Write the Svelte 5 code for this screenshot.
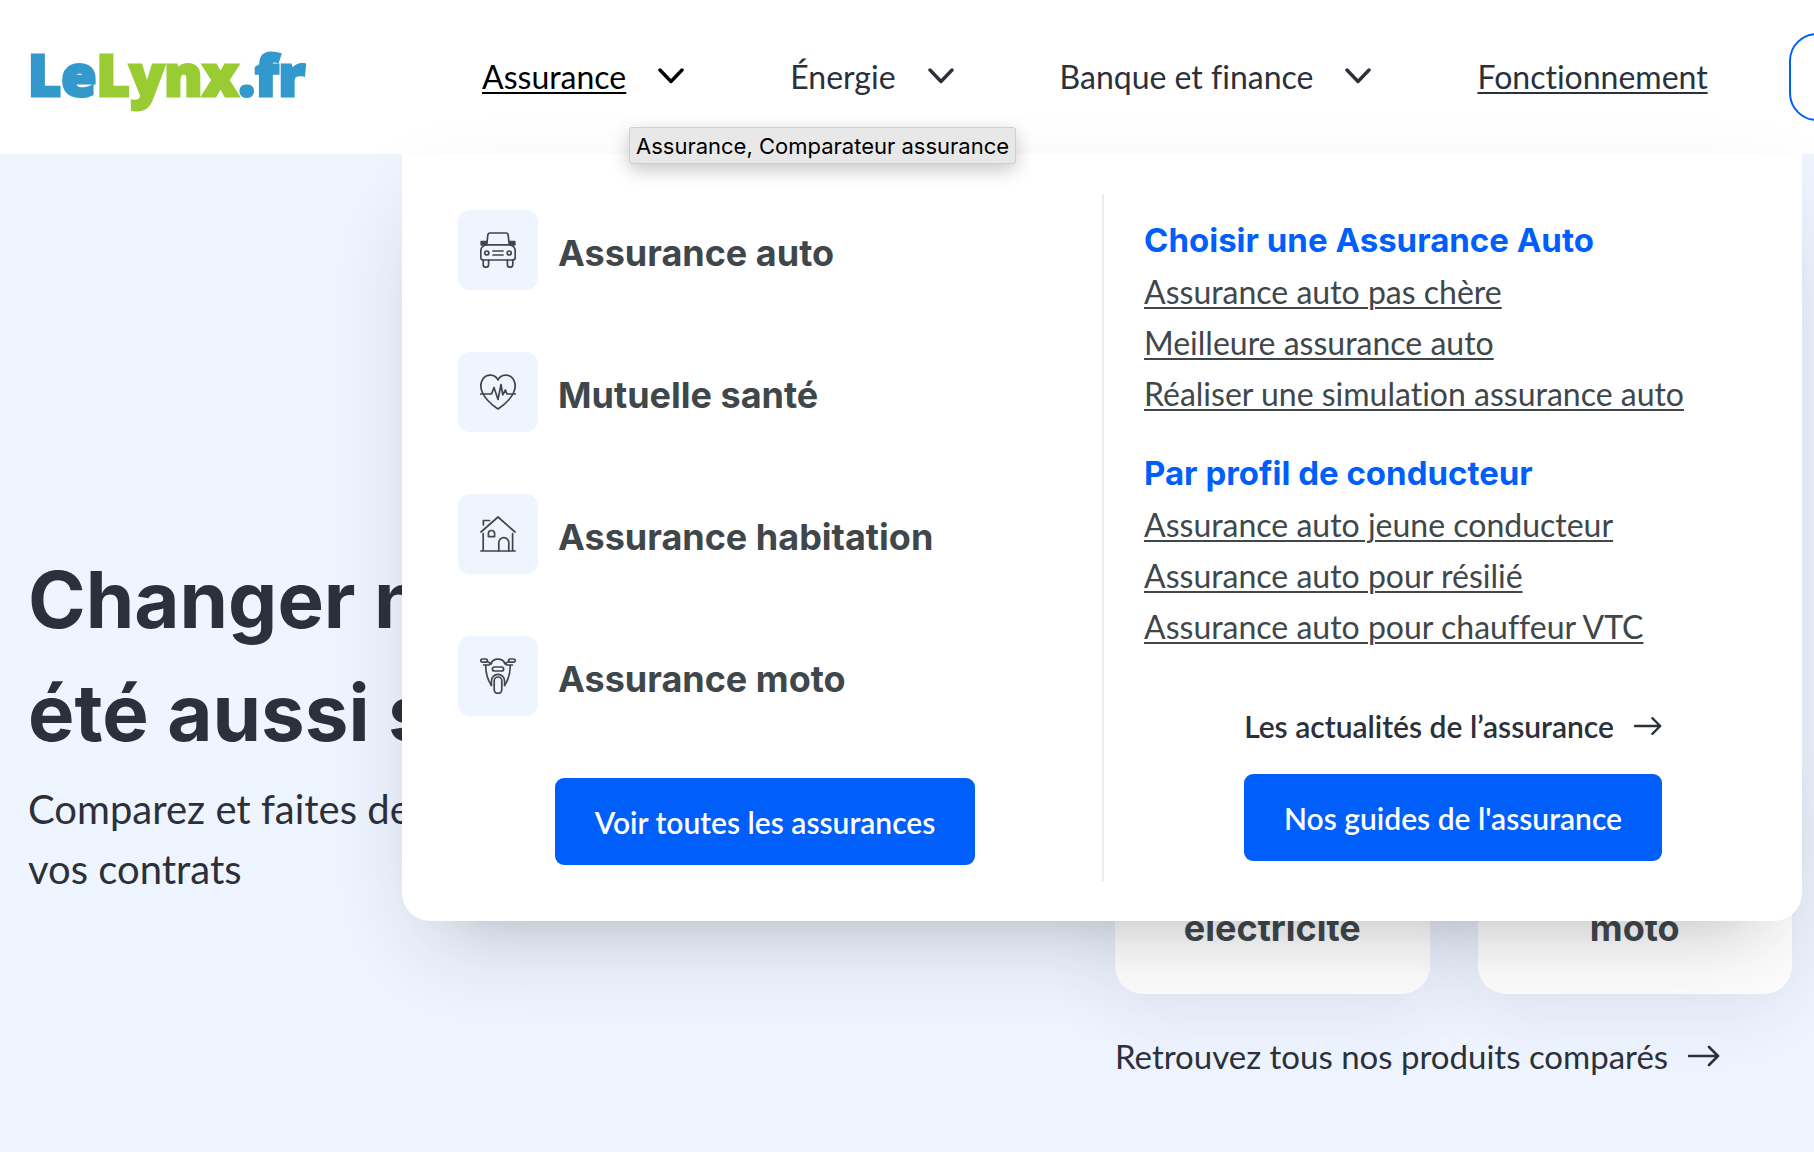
<script>
  const nav = [
    { label: 'Assurance', menu: true, active: true },
    { label: 'Énergie', menu: true },
    { label: 'Banque et finance', menu: true },
    { label: 'Fonctionnement', menu: false }
  ];

  const products = [
    { label: 'Assurance auto', icon: 'car' },
    { label: 'Mutuelle santé', icon: 'heart' },
    { label: 'Assurance habitation', icon: 'house' },
    { label: 'Assurance moto', icon: 'moto' }
  ];

  const groups = [
    {
      title: 'Choisir une Assurance Auto',
      links: ['Assurance auto pas chère', 'Meilleure assurance auto', 'Réaliser une simulation assurance auto']
    },
    {
      title: 'Par profil de conducteur',
      links: ['Assurance auto jeune conducteur', 'Assurance auto pour résilié', 'Assurance auto pour chauffeur VTC']
    }
  ];
</script>

{#snippet icon(name)}
  <svg class="icon" viewBox="0 0 36 36" aria-hidden="true">
    {#if name === 'car'}
      <path d="M6.8 12.5 L7.8 3.2 Q8 1 10 1 H26 Q28 1 28.2 3.2 L29.2 12.5" />
      <path class="solid" d="M1.2 9.5 H6.4 L6 12.8 H1.2 Z M34.8 9.5 H29.6 L30 12.8 H34.8 Z" />
      <path d="M6 12.8 H30 Q35.2 14.5 35.2 19 V25.5 Q35.2 28 32.5 28 H3.5 Q0.8 28 0.8 25.5 V19 Q0.8 14.5 6 12.8 Z" />
      <circle cx="6.8" cy="21" r="2" />
      <circle cx="29.2" cy="21" r="2" />
      <path d="M13 19 H23 M13 23 H23" />
      <path d="M3.2 28 V32.5 A2.7 2.7 0 0 0 8.6 32.5 V28 M27.4 28 V32.5 A2.7 2.7 0 0 0 32.8 32.5 V28" />
    {:else if name === 'heart'}
      <path d="M18 6 C15 -0.5 6.5 -0.2 3 4.8 C0.6 8.3 0.4 14 2.4 18.5 C5.2 25 12 31 18 35 C24 31 30.8 25 33.6 18.5 C35.6 14 35.4 8.3 33 4.8 C29.5 -0.2 21 -0.5 18 6 Z" />
      <path d="M0.2 20 H11.5 L14 13.5 L18 25.5 L21 10.5 L22.8 20.8 L25.4 16 L27 20 H35.8" />
    {:else if name === 'house'}
      <path d="M1 16 L18 1 L35 16 M3.4 9 V4.5 H9.5 M3.2 17.5 V35 M32.6 17.5 V35 M0.8 35 H35.2" />
      <path d="M8.4 20.6 V17.6 A3.1 3.1 0 0 1 14.6 17.6 V20.6 Z" />
      <path d="M18.8 35 V26.6 A5 5 0 0 1 28.8 26.6 V35" />
    {:else}
      <rect x="0.8" y="1" width="6.6" height="3.2" rx="1.6" />
      <rect x="28.6" y="1" width="6.6" height="3.2" rx="1.6" />
      <path d="M7 3.4 L11 5.6 M29 3.4 L25 5.6 M3.6 7 H9 L11.4 5.4 M32.4 7 H27 L24.6 5.4" />
      <path d="M11 5.6 C13.4 -0.4 22.6 -0.4 25 5.6" />
      <path d="M5.8 7.4 C5.6 14 7.4 21.5 11.4 27.4 M30.2 7.4 C30.4 14 28.6 21.5 24.6 27.4" />
      <rect x="12.4" y="9" width="11.2" height="4" rx="2" />
      <path d="M11.4 27.4 V23.4 C11.4 14 24.6 14 24.6 23.4 V27.4" />
      <rect x="14.2" y="19" width="7.6" height="16.4" rx="3.8" />
    {/if}
  </svg>
{/snippet}

{#snippet arrow()}
  <svg class="arrow" viewBox="0 0 32 22" aria-hidden="true">
    <path d="M1 11 H30 M21 2 L30 11 L21 20" />
  </svg>
{/snippet}

<div class="page">
  <header>
    <a class="logo" href="#accueil" aria-label="LeLynx.fr">Le<b>Lynx</b>.fr</a>
    <nav>
      {#each nav as item}
        {#if item.menu}
          <button class="entry" class:active={item.active} aria-expanded={!!item.active}>
            <span>{item.label}</span>
            <svg class="chevron" viewBox="0 0 26 16" aria-hidden="true"><path d="M2 2 L13 13.5 L24 2" /></svg>
          </button>
        {:else}
          <a class="entry underlined" href="#fonctionnement">{item.label}</a>
        {/if}
      {/each}
    </nav>
    <button class="account" aria-label="Mon espace"></button>
  </header>

  <main>
    <section class="intro">
      <h1>Changer n’a<br />été aussi sûr</h1>
      <p>Comparez et faites des<br />vos contrats</p>
    </section>
    <section class="offers">
      <div class="cards">
        <a class="card" href="#electricite">électricité</a>
        <a class="card" href="#moto">moto</a>
      </div>
      <a class="more" href="#produits">Retrouvez tous nos produits comparés {@render arrow()}</a>
    </section>
  </main>

  <div class="menu">
    <div class="products">
      {#each products as product}
        <a class="product" href="#{product.icon}">
          <span class="tile">{@render icon(product.icon)}</span>
          <span class="label">{product.label}</span>
        </a>
      {/each}
      <button class="cta">Voir toutes les assurances</button>
    </div>
    <div class="guides">
      {#each groups as group}
        <section class="group">
          <h2>{group.title}</h2>
          <ul>
            {#each group.links as link}
              <li><a href="#guide">{link}</a></li>
            {/each}
          </ul>
        </section>
      {/each}
      <div class="actions">
        <a class="news" href="#actualites">Les actualités de l’assurance {@render arrow()}</a>
        <button class="cta">Nos guides de l'assurance</button>
      </div>
    </div>
  </div>

  <div class="tooltip" role="tooltip">Assurance, Comparateur assurance</div>
</div>

<style>
  :global(body) {
    overflow: hidden;
    background: #eff5ff;
  }

  .page {
    position: relative;
    min-height: 100vh;
    overflow: hidden;
    display: flex;
    flex-direction: column;
    color: #2b303b;
    font-family: Lato, 'Noto Sans', sans-serif;
    font-size: 32px;
    font-variant-ligatures: none;
  }

  a {
    color: inherit;
    text-decoration: none;
  }

  button {
    font: inherit;
    color: inherit;
    border: 0;
    padding: 0;
    background: none;
  }

  h1,
  h2,
  p,
  ul {
    margin: 0;
    padding: 0;
  }

  h1,
  h2,
  .label,
  .card {
    font-family: Inter, 'Noto Sans', sans-serif;
    font-weight: 700;
  }

  header {
    display: flex;
    align-items: center;
    height: 154px;
    padding-left: 28px;
    background: #fff;
    white-space: nowrap;
  }

  .logo {
    flex: 0 0 454px;
    padding-bottom: 6px;
    font-family: 'Open Sans', sans-serif;
    font-weight: 800;
    font-size: 57px;
    color: #39c;
    -webkit-text-stroke: 3px currentColor;
  }

  .logo b {
    font-weight: inherit;
    color: #9c3;
  }

  nav {
    display: flex;
    gap: 106px;
    padding-bottom: 2px;
  }

  .entry {
    display: flex;
    align-items: center;
    gap: 32px;
  }

  .active {
    color: #000;
  }

  .active span,
  .underlined {
    text-decoration: underline 2px;
    text-underline-offset: 3px;
  }

  svg {
    fill: none;
    stroke: currentColor;
    stroke-linecap: round;
    stroke-linejoin: round;
  }

  .chevron {
    width: 26px;
    height: 16px;
    stroke-width: 3.4;
  }

  .account {
    flex: 0 0 200px;
    height: 88px;
    margin-left: 81px;
    border: 2px solid #005ffa;
    border-radius: 28px;
  }

  main {
    flex: 1;
    display: flex;
    justify-content: space-between;
    align-items: flex-end;
    padding: 0 22px 0 28px;
  }

  .intro {
    padding-bottom: 253px;
    white-space: nowrap;
  }

  h1 {
    font-size: 78px;
    line-height: 113px;
  }

  .intro p {
    margin-top: 10px;
    font-size: 40px;
    line-height: 60px;
  }

  .offers {
    width: 677px;
    flex: none;
    padding-bottom: 73px;
  }

  .cards {
    display: grid;
    grid-template-columns: 1fr 1fr;
    gap: 48px;
  }

  .card {
    display: flex;
    justify-content: center;
    align-items: flex-end;
    height: 260px;
    padding-bottom: 44px;
    box-sizing: border-box;
    border-radius: 28px;
    background: #fff;
    box-shadow: 0 30px 80px rgba(50, 50, 93, 0.06);
    font-size: 36px;
    line-height: 44px;
    color: #40474a;
  }

  .more {
    display: flex;
    align-items: center;
    gap: 20px;
    margin-top: 39px;
    font-size: 33px;
    line-height: 46px;
    white-space: nowrap;
  }

  .arrow {
    width: 32px;
    height: 22px;
    stroke-width: 2.6;
  }

  .menu {
    position: absolute;
    top: 154px;
    left: 402px;
    right: 12px;
    display: grid;
    grid-template-columns: 1fr 1fr;
    padding: 40px;
    border-radius: 0 0 28px 28px;
    background: #fff;
    color: #40474a;
    box-shadow:
      0 40px 100px -20px rgba(30, 30, 50, 0.17),
      0 40px 60px -60px rgba(0, 0, 0, 0.25);
  }

  .products {
    display: flex;
    flex-direction: column;
    gap: 62px;
    padding: 16px 30px 16px 16px;
  }

  .product {
    display: flex;
    align-items: center;
    gap: 20px;
  }

  .label {
    padding-top: 6px;
    font-size: 36px;
    line-height: 44px;
  }

  .tile {
    display: grid;
    place-items: center;
    width: 80px;
    height: 80px;
    border-radius: 12px;
    background: #eff5ff;
  }

  .icon {
    width: 36px;
    height: 36px;
    stroke-width: 1.7;
  }

  .solid {
    fill: currentColor;
  }

  .cta {
    align-self: center;
    height: 87px;
    padding: 0 40px;
    border-radius: 9px;
    background: #005ffa;
    color: #fff;
    font-size: 30px;
    font-weight: 600;
  }

  .guides {
    display: flex;
    flex-direction: column;
    gap: 29px;
    padding: 21px 0 0 40px;
    border-left: 2px solid #ececec;
  }

  h2 {
    font-size: 33px;
    line-height: 51px;
    color: #005ffa;
  }

  ul {
    list-style: none;
    line-height: 51px;
  }

  li a {
    text-decoration: underline 2px;
    text-underline-offset: 3px;
  }

  .actions {
    display: flex;
    flex-direction: column;
    align-items: center;
    gap: 27px;
    margin-top: 24px;
  }

  .news {
    display: flex;
    align-items: center;
    gap: 20px;
    line-height: 42px;
    font-size: 30px;
    font-weight: 600;
    color: #2b303b;
  }

  .news .arrow {
    width: 28px;
    height: 20px;
  }

  .tooltip {
    position: absolute;
    top: 127px;
    left: 629px;
    padding: 1px 6px 0;
    border: 1px solid #cfcfcf;
    border-radius: 3px;
    background: #e8e8e8;
    box-shadow: 0 6px 18px rgba(0, 0, 0, 0.22);
    color: #000;
    font-family: Inter, sans-serif;
    font-size: 22px;
    line-height: 34px;
    white-space: nowrap;
  }
</style>
